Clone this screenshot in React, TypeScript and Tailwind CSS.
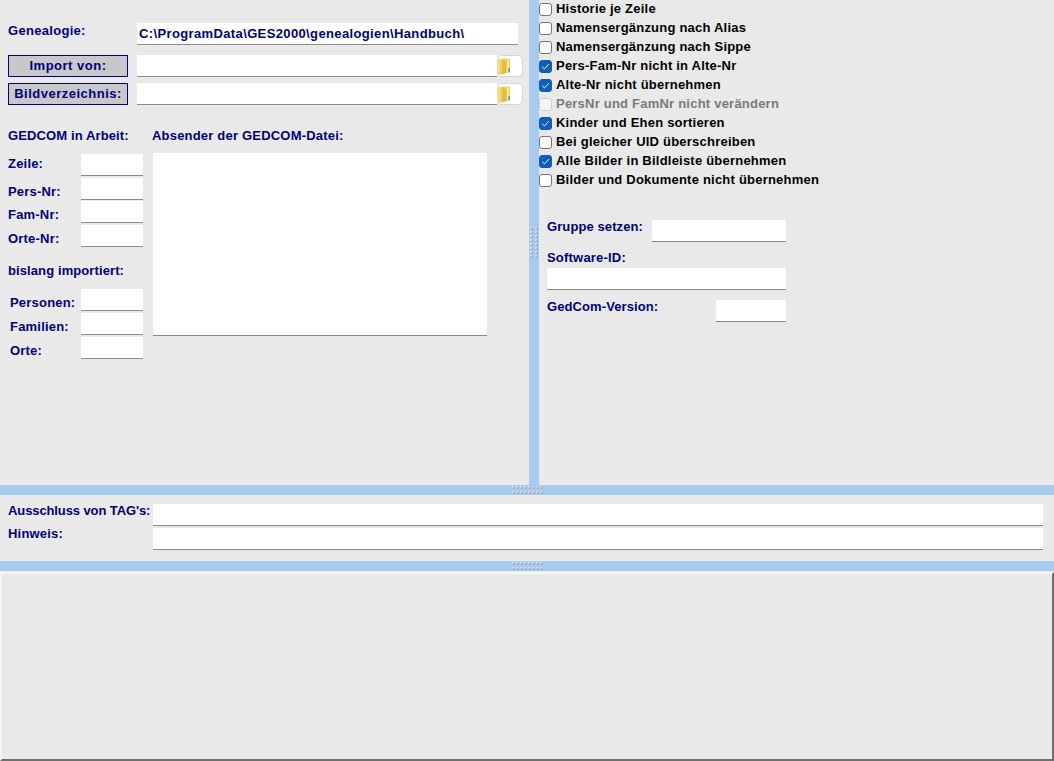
import * as React from 'react'

const labelCls = 'text-[13px] leading-[15px] font-bold text-[#000080] whitespace-nowrap'

function Field({ className = '', value }: { className?: string; value?: string }) {
  return (
    <div className={`bg-white border-b border-[#8a8a8a] text-[13px] leading-[21px] font-bold tracking-[0.37px] text-[#000080] pl-[2px] whitespace-nowrap overflow-hidden ${className}`}>
      {value}
    </div>
  )
}

function FolderIcon() {
  return (
    <svg width="14" height="17" viewBox="0 0 14 17" className="-ml-[1px] shrink-0">
      <path d="M6 1 H12.5 V14.5 H6 Z" fill="#f9e68f" stroke="#dcbc55" strokeWidth="0.7" />
      <rect x="11.5" y="10" width="1.5" height="4" fill="#3f97d8" />
      <path d="M0 2 L5 0.5 L9.5 2.5 V15 L5 16.5 L0 15.5 Z" fill="#f0cf5f" />
      <path d="M5 2 L9.5 3 V15 L5 16.5 Z" fill="#e6bb3f" />
      <path d="M0 2 H3 V15.5 H0 Z" fill="#f3dc80" />
    </svg>
  )
}

function PathRow({ label }: { label: string }) {
  return (
    <div className="flex h-[22px] items-stretch">
      <button className={`w-[120px] border border-[#000080] bg-[#c8c8c8] pb-[2px] tracking-[0.5px] ${labelCls}`}>{label}</button>
      <Field className="ml-[9px] w-[360px]" />
      <div className="flex w-[26px] items-center rounded-[5px] border border-[#d6d6d6] bg-white">
        <FolderIcon />
      </div>
    </div>
  )
}

function CounterRow({ label, labelWidth, top = 'pt-[6px]' }: { label: string; labelWidth: string; top?: string }) {
  return (
    <div className="flex h-[22px] items-stretch">
      <div className={`tracking-[0.2px] ${labelCls} ${labelWidth} ${top}`}>{label}</div>
      <Field className="w-[62px]" />
    </div>
  )
}

function Check({ label, checked, disabled }: { label: string; checked?: boolean; disabled?: boolean }) {
  return (
    <div className="flex h-[19px] items-center">
      <span
        className={`flex h-[13px] w-[13px] items-center justify-center rounded-[3px] border ${
          checked ? 'border-[#0f5fb8] bg-[#0f5fb8]' : disabled ? 'border-[#cfcfcf] bg-[#f4f4f4]' : 'border-[#767676] bg-white'
        }`}
      >
        {checked && (
          <svg width="9" height="9" viewBox="0 0 9 9" fill="none">
            <path d="M1.2 4.8 L3.5 7 L7.8 2" stroke="#dfeaf6" strokeWidth="1" />
          </svg>
        )}
      </span>
      <span className={`ml-[4px] -mt-[2px] text-[13px] leading-[15px] font-bold tracking-[0.22px] whitespace-nowrap ${disabled ? 'text-[#7a7a7a]' : 'text-black'}`}>
        {label}
      </span>
    </div>
  )
}

// little dotted grip shown in the middle of each splitter
function Grip({ cols, rows, className }: { cols: number; rows: number; className: string }) {
  const dots = Array.from({ length: cols * rows })
  return (
    <div className={`grid ${className}`} style={{ gridTemplateColumns: `repeat(${cols}, 3px)` }}>
      {dots.map((_, i) => (
        <span key={i} className="h-[3px] w-[3px] bg-gradient-to-br from-[#eef3fb] to-[#7f93b8]" />
      ))}
    </div>
  )
}

function HSplitter() {
  return (
    <div className="flex h-[10px] items-center justify-center bg-[#a6caf0]">
      <Grip cols={8} rows={2} className="gap-x-[1px] gap-y-[2px]" />
    </div>
  )
}

const checks = [
  { label: 'Historie je Zeile' },
  { label: 'Namensergänzung nach Alias' },
  { label: 'Namensergänzung nach Sippe' },
  { label: 'Pers-Fam-Nr nicht in Alte-Nr', checked: true },
  { label: 'Alte-Nr nicht übernehmen', checked: true },
  { label: 'PersNr und FamNr nicht verändern', disabled: true },
  { label: 'Kinder und Ehen sortieren', checked: true },
  { label: 'Bei gleicher UID überschreiben' },
  { label: 'Alle Bilder in Bildleiste übernehmen', checked: true },
  { label: 'Bilder und Dokumente nicht übernehmen' },
]

export default function App() {
  return (
    <div className="flex h-[761px] w-[1054px] flex-col overflow-hidden bg-[#e9e9e9] font-['Liberation_Sans',Arial,sans-serif]">
      {/* top area */}
      <div className="flex h-[485px]">
        <div className="w-[529px] pl-[8px] pt-[23px]">
          <div className="flex h-[22px]">
            <div className={`${labelCls} tracking-[0.3px] w-[129px] -mt-[1px] pt-[1px]`}>Genealogie:</div>
            <Field className="w-[381px]" value="C:\ProgramData\GES2000\genealogien\Handbuch\" />
          </div>
          <div className="mt-[10px] flex flex-col gap-[6px]">
            <PathRow label="Import von:" />
            <PathRow label="Bildverzeichnis:" />
          </div>
          <div className="mt-[23px] flex">
            <div className="w-[135px]">
              <div className={`${labelCls} tracking-[0.12px] h-[26px]`}>GEDCOM in Arbeit:</div>
              <div className="flex flex-col gap-[1.5px]">
                <CounterRow label="Zeile:" labelWidth="w-[73px]" top="pt-[2px]" />
                <CounterRow label="Pers-Nr:" labelWidth="w-[73px]" />
                <CounterRow label="Fam-Nr:" labelWidth="w-[73px]" />
                <CounterRow label="Orte-Nr:" labelWidth="w-[73px]" />
              </div>
              <div className={`${labelCls} tracking-[0.1px] mt-[17px] h-[25px] -translate-y-[1px]`}>bislang importiert:</div>
              <div className="flex flex-col gap-[2px] pl-[2px]">
                <CounterRow label="Personen:" labelWidth="w-[71px]" />
                <CounterRow label="Familien:" labelWidth="w-[71px]" />
                <CounterRow label="Orte:" labelWidth="w-[71px]" />
              </div>
            </div>
            <div className="ml-[9px]">
              <div className={`${labelCls} tracking-[0.2px] h-[25px]`}>Absender der GEDCOM-Datei:</div>
              <Field className="ml-[1px] h-[183px] w-[334px]" />
            </div>
          </div>
        </div>

        <div className="flex w-[10px] items-center justify-center bg-[#a6caf0]">
          <Grip cols={2} rows={8} className="gap-x-[2px] gap-y-[1px]" />
        </div>

        <div className="flex-1">
          <div className="flex flex-col">
            {checks.map((c) => (
              <Check key={c.label} {...c} />
            ))}
          </div>
          <div className="ml-[8px] mt-[30px]">
            <div className="flex h-[22px]">
              <div className={`${labelCls} tracking-[0.1px] w-[105px] -mt-[1px]`}>Gruppe setzen:</div>
              <Field className="w-[134px]" />
            </div>
            <div className={`${labelCls} tracking-[0.2px] mt-[8px] h-[18px]`}>Software-ID:</div>
            <Field className="h-[22px] w-[239px]" />
            <div className="mt-[10px] flex h-[22px]">
              <div className={`${labelCls} tracking-[0.1px] w-[169px] -mt-[1px]`}>GedCom-Version:</div>
              <Field className="w-[70px]" />
            </div>
          </div>
        </div>
      </div>

      <HSplitter />

      {/* TAG exclusion */}
      <div className="flex h-[66px] flex-col gap-[2px] pl-[8px] pt-[9px]">
        <div className="flex h-[22px]">
          <div className={`${labelCls} tracking-[-0.1px] w-[145px] -mt-[1px]`}>Ausschluss von TAG's:</div>
          <Field className="w-[890px]" />
        </div>
        <div className="flex h-[22px]">
          <div className={`${labelCls} tracking-[0.2px] w-[145px] -mt-[2px]`}>Hinweis:</div>
          <Field className="w-[890px]" />
        </div>
      </div>

      <HSplitter />

      {/* log panel */}
      <div className="mt-[1px] flex-1 border-2 border-t-[#f4f4f4] border-l-[#f4f4f4] border-r-[#707070] border-b-[#707070] bg-[#e9e9e9]" />
    </div>
  )
}
